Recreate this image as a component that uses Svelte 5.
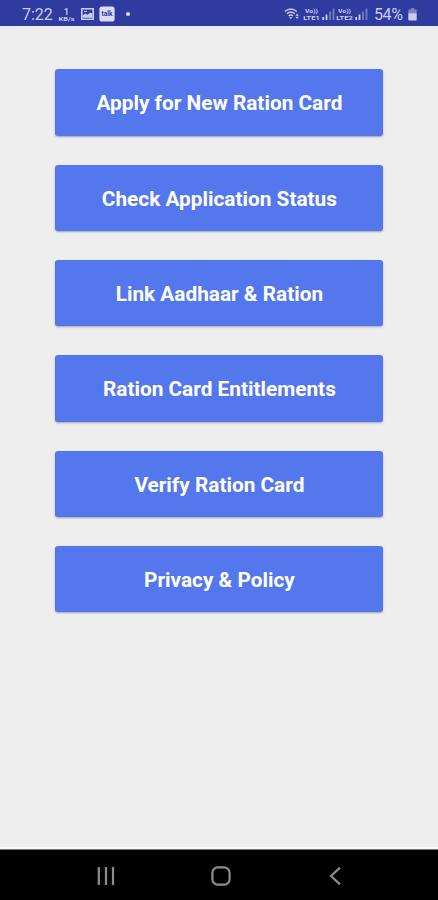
<script lang="ts">
  const actions = [
    "Apply for New Ration Card",
    "Check Application Status",
    "Link Aadhaar & Ration",
    "Ration Card Entitlements",
    "Verify Ration Card",
    "Privacy & Policy"
  ];

  const sims = ["LTE1", "LTE2"];
</script>

<div class="screen">
  <header class="status-bar">
    <span class="time">7:22</span>
    <svg class="speed" width="17" height="16" viewBox="0 0 17 16">
      <text x="8.5" y="8.6" font-size="9.5" font-weight="500" text-anchor="middle">1</text>
      <text x="8.5" y="15.4" font-size="6" font-weight="700" text-anchor="middle" textLength="16" lengthAdjust="spacingAndGlyphs">KB/s</text>
    </svg>
    <svg class="photo" width="13" height="12" viewBox="0 0 13 12">
      <path d="M.8 .8h11.4v10.4H.8z" fill="none" stroke="currentColor" stroke-width="1.6" />
      <path d="M1.5 9.7V7.5l2.8-2 2 1.3L9.5 4.5l2 1v4.2z" fill="currentColor" />
      <path d="M3 3.3h3" stroke="currentColor" />
    </svg>
    <svg class="talk" width="16" height="16" viewBox="0 0 16 16">
      <rect x=".4" y=".4" width="15.2" height="15.2" rx="2.6" fill="currentColor" />
      <text class="cut" x="8" y="10.2" font-size="7" font-weight="700" text-anchor="middle" textLength="11" lengthAdjust="spacingAndGlyphs">talk</text>
    </svg>
    <span class="dot"></span>

    <div class="right">
      <svg class="wifi" width="18" height="14" viewBox="0 0 18 14">
        <g fill="none" stroke="currentColor" stroke-width="1.3">
          <path d="M.8 4.6Q6.8-.6 12.8 4.6" />
          <path d="M2.8 6.8Q6.8 3.3 10.8 6.8" />
          <path d="M4.6 8.9Q6.8 7 9 8.9" />
        </g>
        <path d="M5.2 10.2h3.2L6.8 12.3zM11.4 8.8l1.7-2.3 1.7 2.3zM11.4 9.8h3.4l-1.7 2.3z" fill="currentColor" />
      </svg>
      {#each sims as sim}
        <svg class="lte" width="17" height="15" viewBox="0 0 17 15">
          <text x="8.5" y="6" font-size="6" font-weight="700" text-anchor="middle" textLength="13" lengthAdjust="spacingAndGlyphs">Vo))</text>
          <text x="8.5" y="13.2" font-size="6" font-weight="700" text-anchor="middle" textLength="16.5" lengthAdjust="spacingAndGlyphs">{sim}</text>
        </svg>
        <svg class="signal" width="14" height="13" viewBox="0 0 14 13">
          <path d="M2.2 9v3M5.5 6.5V12" />
          <path class="faint" d="M9 3.5V12M12.5 .5V12" />
        </svg>
      {/each}
      <span class="percent">54%</span>
      <svg class="battery" width="9" height="13" viewBox="0 0 9 13">
        <path d="M2.8 0h3.4v1.4h1.8q.7 0 .7.7V5.5H.3V2.1q0-.7.7-.7h1.8z" fill="currentColor" opacity=".5" />
        <path d="M.3 5.2h8.4v6.6q0 .7-.7.7H1q-.7 0-.7-.7z" fill="currentColor" />
      </svg>
    </div>
  </header>

  <main>
    {#each actions as action}
      <button type="button">{action}</button>
    {/each}
  </main>

  <nav>
    <svg width="20" height="20" viewBox="0 0 20 20">
      <path d="M2.8 1v18M10 1v18M17 1v18" />
    </svg>
    <svg width="20" height="20" viewBox="0 0 20 20">
      <rect x="1.4" y="1.4" width="17.2" height="17.2" rx="5.4" />
    </svg>
    <svg width="20" height="20" viewBox="0 0 20 20">
      <path d="M15 1.6L6 10l9 8.4" />
    </svg>
  </nav>
</div>

<style>
  :global(body) { background: #eee; }
  .screen { display: flex; flex-direction: column; height: 900px; overflow: hidden; background: #eee; font-family: Roboto, "Liberation Sans", sans-serif; }

  .status-bar { display: flex; align-items: center; box-sizing: border-box; height: 26px; padding: 2px 21px 0 22px; background: #2f3b9f; color: #c8cdf0; flex: none; }
  .status-bar svg { display: block; flex: none; }
  .status-bar text { fill: currentColor; }
  .status-bar .cut { fill: #2f3b9f; }
  .time, .percent { font-size: 16px; line-height: 22px; padding-top: 1px; }
  .time { width: 36px; }
  .photo { margin-left: 6px; }
  .talk { margin-left: 5px; color: #d9dcf5; }
  .dot { width: 4px; height: 4px; margin-left: 10.5px; border-radius: 50%; background: #d9dcf5; }
  .right { display: flex; align-items: center; margin-left: auto; }
  .lte { margin-left: 1px; }
  .signal { margin-left: 1px; fill: none; stroke: currentColor; stroke-width: 1.8; }
  .signal .faint { opacity: 0.45; }
  .percent { width: 29px; margin-left: 6px; letter-spacing: -0.4px; }
  .battery { margin-left: 5px; }

  main { flex: 1; display: flex; flex-direction: column; align-items: center; gap: 28.8px; padding: 43.4px 0 0 .8px; border-bottom: 2px solid #fafafa; }
  button { width: 328px; height: 66.5px; padding: 1.5px 0 0; border: 0; border-radius: 3px; background: #5477ee; color: #fff; font-family: inherit; font-size: 20.8px; font-weight: 700; box-shadow: 0 1px 2px rgba(60, 70, 110, 0.45); }

  nav { display: flex; justify-content: space-between; align-items: center; box-sizing: border-box; height: 51px; padding: 2px 93px 0 96px; border-top: 1px solid #777; background: #000; flex: none; }
  nav svg { fill: none; stroke: #8d8d8d; stroke-width: 2.2; }
</style>
